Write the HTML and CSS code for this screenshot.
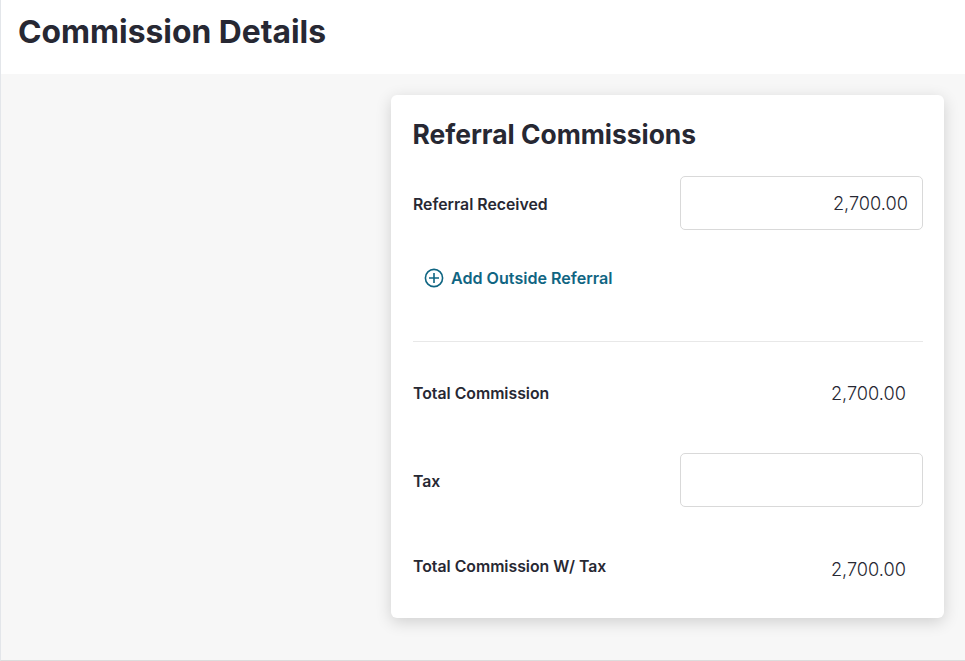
FILE: index.html
```html
<!DOCTYPE html>
<html lang="en">
<head>
    <meta charset="UTF-8">
    <title>Commission Details</title>
    <link rel="stylesheet" href="styles.css">
</head>
<body>
    <div class="page">
        <header class="page-header">
            <h1>Commission Details</h1>
        </header>
        <main class="page-main">
            <section class="card">
                <h2>Referral Commissions</h2>
                <div class="row row-received">
                    <label>Referral Received</label>
                    <input class="money-input" type="text" value="2,700.00">
                </div>
                <a class="add-link" href="#">
                    <svg width="20" height="20" viewBox="0 0 20 20" fill="none" stroke="#0f6582" stroke-width="1.6">
                        <circle cx="10" cy="10" r="8.6"></circle>
                        <path d="M10 5v10M5 10h10"></path>
                    </svg>
                    Add Outside Referral
                </a>
                <hr>
                <div class="row row-total">
                    <label>Total Commission</label>
                    <span class="amount">2,700.00</span>
                </div>
                <div class="row row-tax">
                    <label>Tax</label>
                    <input class="money-input" type="text">
                </div>
                <div class="row row-with-tax">
                    <label>Total Commission W/ Tax</label>
                    <span class="amount amount-low">2,700.00</span>
                </div>
            </section>
        </main>
    </div>
</body>
</html>
```

FILE: styles.css
```css
* {
    box-sizing: border-box;
}
html, body {
    height: 100%;
}
body {
    margin: 0;
    font-family: "Inter", "Noto Sans", sans-serif;
    color: #272833;
    background: #f7f7f7;
}
.page {
    height: 661px;
    display: flex;
    flex-direction: column;
    border-left: 1px solid #e3e6ea;
    border-bottom: 1px solid #dcdcdc;
}
.page-header {
    height: 74px;
    flex: none;
    background: #fff;
    padding: 12px 17px 0;
}
.page-header h1 {
    margin: 0;
    font-size: 31.8px;
    line-height: 40px;
    font-weight: 700;
}
.page-main {
    flex: 1;
    display: flex;
    justify-content: flex-end;
    padding: 21px 21px 0 0;
}
.card {
    width: 553px;
    height: 523px;
    background: #fff;
    border-radius: 6px;
    padding: 22px 21px 0 22px;
    box-shadow: 0 4px 16px rgba(0, 0, 0, 0.16);
}
.card h2 {
    margin: 0 0 0 -0.5px;
    font-size: 26.4px;
    line-height: 34px;
    font-weight: 700;
}
.row {
    display: flex;
    align-items: center;
    justify-content: space-between;
}
.row label {
    font-size: 15.8px;
    font-weight: 600;
}
.row-received {
    margin-top: 25px;
}
.row-received label, .row-tax label {
    padding-top: 2px;
}
.money-input {
    width: 243px;
    height: 54px;
    border: 1px solid #d9d9d9;
    border-radius: 5px;
    background: #fff;
    padding: 0 14px;
    text-align: right;
    font: 300 18.2px "Inter", "Noto Sans", sans-serif;
    color: #272833;
}
.add-link {
    display: flex;
    align-items: center;
    gap: 7px;
    margin: 36px 0 0 11px;
    height: 24px;
    font-size: 16.1px;
    font-weight: 600;
    color: #0f6582;
    text-decoration: none;
}
hr {
    margin: 51px 0 0;
    border: 0;
    border-top: 1px solid #e8e8e8;
}
.amount {
    font-size: 18.2px;
    font-weight: 300;
    padding-right: 17px;
}
.row-total {
    margin-top: 37px;
    height: 28px;
}
.row-tax {
    margin-top: 46px;
}
.row-with-tax {
    margin-top: 50px;
    height: 28px;
    align-items: flex-start;
}
.amount-low {
    margin-top: 1px;
}
```
